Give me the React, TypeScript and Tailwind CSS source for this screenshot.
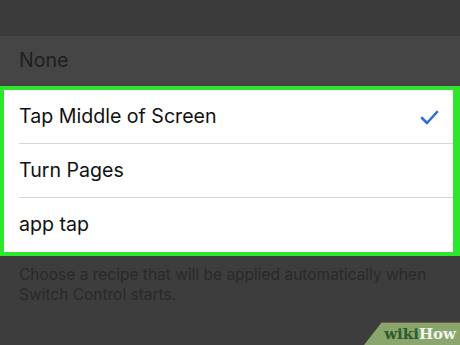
import React from 'react';

const recipes = [
  { id: 'middle', label: 'Tap Middle of Screen', checked: true },
  { id: 'pages', label: 'Turn Pages', checked: false },
  { id: 'app', label: 'app tap', checked: false }
];

const Check = () => (
  <svg width="20" height="16" viewBox="0 0 20 16" fill="none">
    <path d="M3 9l5 5L18 3" stroke="#2f6fd6" strokeWidth="2.6" strokeLinecap="round" strokeLinejoin="round" />
  </svg>
);

export default function App() {
  return (
    <div
      className="w-[460px] h-[345px] overflow-hidden bg-[#3d3d3d] flex flex-col relative"
      style={{ fontFamily: 'Inter, "Liberation Sans", sans-serif' }}
    >
      {/* top header band */}
      <div className="h-[36px] bg-[#3b3b3b]" />

      {/* None row (dimmed) */}
      <div className="h-[50px] bg-[#454545] flex items-center pl-[19px]">
        <span className="text-[19.6px] text-[#1f1f1f]">None</span>
      </div>

      {/* highlighted list */}
      <div className="border-[#2fe62f] border-l-4 border-t-4 border-b-4 border-r-[7px] bg-white">
        {recipes.map((item, i) => (
          <div key={item.id} className="pl-[15px]">
            <div
              className={`h-[54px] flex items-center justify-between pr-[14px] ${
                i < recipes.length - 1 ? 'border-b border-[#d6d6d6]' : ''
              }`}
            >
              <span className="text-[19.6px] text-[#111]">{item.label}</span>
              {item.checked && <Check />}
            </div>
          </div>
        ))}
      </div>

      {/* footer note */}
      <div className="pt-[9px] pl-[19px] pr-4 text-[15.5px] leading-[20px] text-[#292929]">
        Choose a recipe that will be applied automatically when
        <br />
        Switch Control starts.
      </div>

      {/* wikiHow badge */}
      <div className="absolute right-0 bottom-0 w-[96px] h-[23px] bg-[#8aa66c] border-t border-[#6b5a45] [clip-path:polygon(18px_0,100%_0,100%_100%,0_100%)] flex items-center justify-end pr-[4px]">
        <span
          className="text-[15px] font-bold leading-none"
          style={{ fontFamily: '"DejaVu Serif", "Liberation Serif", serif' }}
        >
          <span className="text-[#2e5a2c]">wiki</span>
          <span className="text-[#f2f5ee]">How</span>
        </span>
      </div>
    </div>
  );
}
